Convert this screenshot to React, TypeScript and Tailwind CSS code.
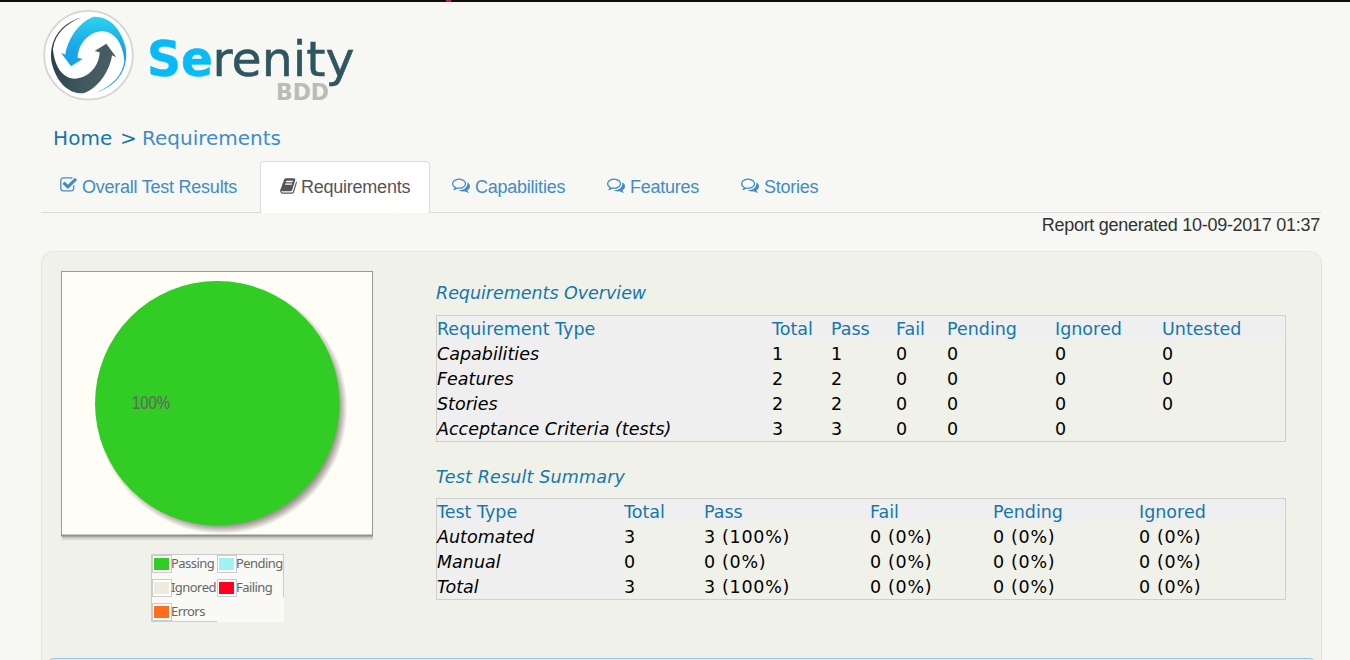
import React from "react";

const CHECK =
  "M1472 930v318q0 119-84.500 203.500t-203.500 84.500h-832q-119 0-203.500-84.500t-84.500-203.500v-832q0-119 84.500-203.500t203.500-84.500h832q63 0 117 25 15 7 18 23 3 17-9 29l-49 49q-10 10-23 10-3 0-9-2-23-6-45-6h-832q-66 0-113 47t-47 113v832q0 66 47 113t113 47h832q66 0 113-47t47-113v-254q0-13 9-22l64-64q10-10 23-10 6 0 12 3 20 8 20 29zm231-489l-814 814q-24 24-57 24t-57-24l-430-430q-24-24-24-57t24-57l110-110q24-24 57-24t57 24l263 263 647-647q24-24 57-24t57 24l110 110q24 24 24 57t-24 57z";
const BOOK =
  "M1703 478q40 57 18 129l-275 906q-19 64-76.500 107.500t-122.500 43.500h-923q-77 0-148.500-53.500t-99.500-131.500q-24-67-2-127 0-4 3-27t4-37q1-8-3-21.500t-3-19.500q2-11 8-21t16.500-23.500 16.500-23.500q23-38 45-91.500t30-91.500q3-10 .5-30t-.5-28q3-11 17-28t17-23q21-36 42-92t25-90q1-9-2.500-32t.5-28q4-13 22-30.500t22-22.500q19-26 42.500-84.500t27.500-96.500q1-8-3-25.500t-2-26.500q2-8 9-18t18-23 17-21q8-12 16.500-30.500t15-35 16-36 19.500-32 26.500-23.500 36-11.500 47.500 5.500l-1 3q38-9 51-9h761q74 0 114 56t18 130l-274 906q-36 119-71.500 153.500t-128.500 34.500h-869q-27 0-38 15-11 16-1 43 24 70 144 70h923q29 0 56-15.500t35-41.500l300-987q7-22 5-57 38 15 59 43zm-1064 2q-4 13 2 22.500t20 9.500h608q13 0 25.500-9.500t16.500-22.500l21-64q4-13-2-22.500t-20-9.500h-608q-13 0-25.500 9.500t-16.500 22.500zm-83 256q-4 13 2 22.500t20 9.500h608q13 0 25.500-9.500t16.500-22.500l21-64q4-13-2-22.500t-20-9.500h-608q-13 0-25.500 9.500t-16.500 22.500z";
const COMMENTS =
  "M704 384q-153 0-286 52t-211.500 141-78.500 191q0 82 53 158t149 132l97 56-35 84q34-20 62-39l44-31 53 10q78 14 153 14 153 0 286-52t211.500-141 78.500-191-78.500-191-211.500-141-286-52zm0-128q191 0 353.500 68.500t256.500 186.500 94 257-94 257-256.500 186.500-353.500 68.500q-86 0-176-16-124 88-278 128-36 9-86 16h-3q-11 0-20.500-8t-11.500-21q-1-3-1-6.500t.5-6.500 2-6l2.500-5 3.500-5.500 4-5 4.500-5 4-4.500q5-6 23-25t26-29.500 22.500-29 25-38.500 20.500-44q-124-72-195-177t-71-224q0-139 94-257t256.500-186.500 353.500-68.500zm822 1169q10 24 20.500 44t25 38.500 22.500 29 26 29.500 23 25q1 1 4 4.500t4.500 5 4 5 3.500 5.500l2.500 5 2 6 .5 6.500-1 6.500q-3 14-13 22t-22 7q-50-7-86-16-154-40-278-128-90 16-176 16-271 0-472-132 58 4 88 4 161 0 309-45t264-129q125-92 192-212t67-254q0-77-23-152 129 71 204 178t75 230q0 120-71 224.500t-195 176.500z";

function Icon({ d, narrow = false }: { d: string; narrow?: boolean }) {
  return (
    <svg
      viewBox={narrow ? "64 0 1664 1792" : "0 0 1792 1792"}
      className={narrow ? "mb-[3px] h-[18px] w-[17px] shrink-0" : "mb-[3px] h-[18px] w-[18px] shrink-0"}
      fill="currentColor"
    >
      <path d={d} />
    </svg>
  );
}

const ARROW =
  "M87 175 L57 134 L70 140 C76 98 106 44 155 26 C200 24 236 58 251 118 C260 174 236 230 162 254 C212 232 240 204 247 160 C245 122 226 70 180 70 C138 72 108 110 107 149 L122 153 Z";

function Logo() {
  return (
    <svg viewBox="30 0 340 110" className="h-[110px] w-[340px]">
      <defs>
        <linearGradient id="blue" x1="0" y1="0" x2="0" y2="1">
          <stop offset="0" stopColor="#2bd5ee" />
          <stop offset="0.3" stopColor="#1fb0ea" />
          <stop offset="0.5" stopColor="#18a2e8" />
          <stop offset="1" stopColor="#1fa5e8" />
        </linearGradient>
        <linearGradient id="slate" x1="0" y1="0" x2="1" y2="0.3">
          <stop offset="0" stopColor="#4c6068" />
          <stop offset="0.5" stopColor="#435860" />
          <stop offset="1" stopColor="#27424c" />
        </linearGradient>
      </defs>
      <circle cx="88.500" cy="55.200" r="44.300" fill="#fff" stroke="#d6d6d8" strokeWidth="1.800" />
      <g transform="translate(42 8) scale(0.33333)">
        <path d={ARROW} fill="url(#blue)" />
        <path d={ARROW} fill="url(#slate)" transform="rotate(180 140 141)" />
      </g>
      <g fontFamily="'DejaVu Sans', sans-serif">
        <text x="147" y="76" fontSize="50" fontWeight="700" fill="#08baf5" stroke="#08baf5" strokeWidth="0.400" textLength="66" lengthAdjust="spacingAndGlyphs">Se</text>
        <text x="212.500" y="76" fontSize="48" fill="#2f5560" stroke="#2f5560" strokeWidth="0.500" textLength="142" lengthAdjust="spacingAndGlyphs">renity</text>
        <text x="276" y="99.500" fontSize="22.500" fontWeight="700" fill="#bbb" textLength="53" lengthAdjust="spacingAndGlyphs">BDD</text>
      </g>
    </svg>
  );
}

const requirements = [
  ["Capabilities", "1", "1", "0", "0", "0", "0"],
  ["Features", "2", "2", "0", "0", "0", "0"],
  ["Stories", "2", "2", "0", "0", "0", "0"],
  ["Acceptance Criteria (tests)", "3", "3", "0", "0", "0", ""],
];
const results = [
  ["Automated", "3", "3 (100%)", "0 (0%)", "0 (0%)", "0 (0%)"],
  ["Manual", "0", "0 (0%)", "0 (0%)", "0 (0%)", "0 (0%)"],
  ["Total", "3", "3 (100%)", "0 (0%)", "0 (0%)", "0 (0%)"],
];

function Table({ head, rows, cols }: { head: string[]; rows: string[][]; cols: string }) {
  return (
    <div className="w-[850px] border border-[#cfcfcf] text-[17.500px] leading-[27px] whitespace-nowrap text-black">
      <div className={"grid h-[25px] bg-[#efefef] text-[#1477ad] " + cols}>
        {head.map((h) => (
          <span key={h} className="h-[25px]">{h}</span>
        ))}
      </div>
      {rows.map((r) => (
        <div key={r[0]} className={"grid h-[25px] " + cols}>
          {r.map((c, i) => (
            <span
              key={i}
              className={
                i === 0
                  ? "h-[25px] bg-[#efefef] italic"
                  : c.includes("%")
                    ? "h-[25px] tracking-[0.700px]"
                    : "h-[25px]"
              }
            >
              {c}
            </span>
          ))}
        </div>
      ))}
    </div>
  );
}

function LegendItem({ color, label }: { color: string; label: string }) {
  return (
    <div className="flex h-6 items-start">
      <span className="h-[18px] w-5 shrink-0 border border-[#ccc] bg-white py-[2px] pr-[2px] pl-px">
        <span className={"block h-full w-full " + color} />
      </span>
      <span className="-ml-px leading-[17px]">{label}</span>
    </div>
  );
}

export default function App() {
  return (
    <div className="flex h-[660px] w-[1350px] flex-col overflow-hidden bg-[#f7f8f3] font-['DejaVu_Sans',sans-serif]">
      <div className="h-[2px] shrink-0 bg-[#120d0d] pl-[446px]">
        <div className="h-[2px] w-[5px] bg-[#a72a42]" />
      </div>
      <header className="-mt-[2px] h-[126px] shrink-0 pl-[30px]">
        <Logo />
      </header>
      <nav className="flex h-[35px] shrink-0 pl-[53px] text-[20px] leading-[24px] text-[#1477ad]">
        <span className="w-[67px] tracking-[0.100px]">Home</span>
        <span className="w-[22px]">&gt;</span>
        <span className="text-[#428bca]">Requirements</span>
      </nav>
      <div className="ml-[41px] flex h-[52px] w-[1280px] shrink-0 border-b border-[#ddd] font-['Liberation_Sans',Arial,sans-serif] text-[18px] tracking-[-0.240px] text-[#428bca]">
        <div className="flex w-[219px] items-center gap-[5px] pl-[19px]">
          <Icon d={CHECK} narrow />
          <span className="pt-px">Overall Test Results</span>
        </div>
        <div className="-mb-px flex w-[170px] items-center gap-[4px] rounded-t-[4px] border border-b-0 border-[#ddd] bg-white pl-[19px] text-[#555]">
          <Icon d={BOOK} narrow />
          <span>Requirements</span>
        </div>
        <div className="flex w-[155px] items-center gap-[5px] pl-[22px]">
          <Icon d={COMMENTS} />
          <span className="pt-px">Capabilities</span>
        </div>
        <div className="flex w-[134px] items-center gap-[5px] pl-[22px]">
          <Icon d={COMMENTS} />
          <span className="pt-px">Features</span>
        </div>
        <div className="flex items-center gap-[5px] pl-[22px]">
          <Icon d={COMMENTS} />
          <span className="pt-px">Stories</span>
        </div>
      </div>
      <div className="h-[38px] w-[1320px] shrink-0 text-right font-['Liberation_Sans',Arial,sans-serif] text-[18px] leading-[24px] tracking-[-0.270px] text-[#333]">
        Report generated 10-09-2017 01:37
      </div>
      <main className="ml-[41px] flex h-[440px] w-[1281px] shrink-0 flex-col rounded-t-[12px] border border-[#e4e5dd] bg-[#f0f1e8]">
        <div className="flex h-[406px] shrink-0">
          <section className="flex w-[394px] shrink-0 flex-col pt-[19px] pl-[19px]">
            <svg viewBox="61 271 312 270" className="h-[270px] w-[312px]">
              <defs>
                <radialGradient id="soft" gradientUnits="userSpaceOnUse" cx="221.500" cy="408" r="126">
                  <stop offset="0.930" stopColor="#9c9590" />
                  <stop offset="0.960" stopColor="#c4bfba" />
                  <stop offset="1" stopColor="#fffdf6" />
                </radialGradient>
                <linearGradient id="drop" x1="0" y1="0" x2="0" y2="1">
                  <stop offset="0" stopColor="#b5b5b0" />
                  <stop offset="1" stopColor="#f0f1e8" />
                </linearGradient>
              </defs>
              <rect x="62" y="536" width="311" height="5" fill="url(#drop)" />
              <rect x="61.500" y="271.500" width="311" height="264" fill="#fffdf6" stroke="#989898" />
              <circle cx="221.500" cy="408" r="126" fill="url(#soft)" />
              <path d="M61 535.500H373" stroke="#929292" strokeWidth="2" />
              <circle cx="217.300" cy="403.300" r="122.300" fill="#32cd24" />
              <text x="132" y="409" fontSize="17.500" fill="#666" stroke="#666" strokeWidth="0.200" fontFamily="'Liberation Sans', Arial, sans-serif" textLength="38" lengthAdjust="spacingAndGlyphs">
                100%
              </text>
            </svg>
            <div className="mt-[13px] ml-[90px] w-[133px] bg-[#f9faf6] font-['Noto_Sans',sans-serif] text-[13px] tracking-[-0.550px] text-[#666]">
              <div className="flex h-[68px]">
                <div className="w-[66px] border border-r-0 border-[#ccc]">
                  <LegendItem color="bg-[#32cd24]" label="Passing" />
                  <LegendItem color="bg-[#eeeadd]" label="Ignored" />
                  <LegendItem color="bg-[#ff6e1c]" label="Errors" />
                </div>
                <div className="h-[43px] w-[67px] border-t border-r border-[#ccc]">
                  <LegendItem color="bg-[#a3f2f2]" label="Pending" />
                  <LegendItem color="bg-[#ff001f]" label="Failing" />
                </div>
              </div>
            </div>
          </section>
          <section className="pt-[28px]">
            <h3 className="h-[35px] text-[17.500px] leading-[26px] tracking-[-0.030px] text-[#1477ad] italic">Requirements Overview</h3>
            <Table
              cols="grid-cols-[335px_59px_65px_51px_108px_107px_1fr]"
              head={["Requirement Type", "Total", "Pass", "Fail", "Pending", "Ignored", "Untested"]}
              rows={requirements}
            />
            <h3 className="mt-[22px] h-[34px] text-[17.500px] leading-[26px] tracking-[0.170px] text-[#1477ad] italic">Test Result Summary</h3>
            <Table
              cols="grid-cols-[187px_80px_166px_123px_146px_1fr]"
              head={["Test Type", "Total", "Pass", "Fail", "Pending", "Ignored"]}
              rows={results}
            />
          </section>
        </div>
        <div className="mx-[7px] h-[40px] shrink-0 rounded-[4px] border border-[#9ac5e4] bg-[#dfeffc]" />
      </main>
    </div>
  );
}
